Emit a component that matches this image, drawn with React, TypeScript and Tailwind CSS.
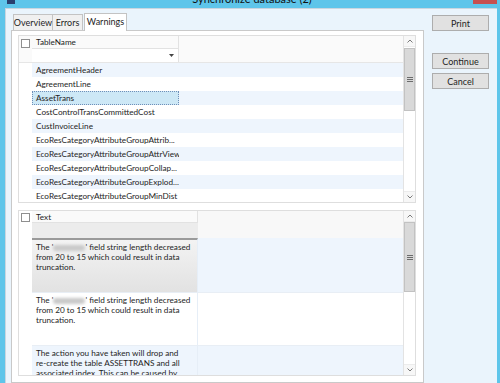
import React from "react";

function ScrollBar({ thumbTop, thumbH }: { thumbTop: number; thumbH: number }) {
  return (
    <div className="w-[12px] border-l border-[#e3e3e3] bg-white flex flex-col shrink-0">
      <div className="h-[11px] flex items-center justify-center bg-[#f7f7f7] border-b border-[#ececec]">
        <svg width="6" height="4" viewBox="0 0 6 4"><path d="M0.5 3.5 L3 1 L5.5 3.5" stroke="#7a7a7a" strokeWidth="1" fill="none" /></svg>
      </div>
      <div className="flex-1">
        <div style={{ marginTop: thumbTop, height: thumbH }} className="bg-[#d9d9d9] border border-[#c2c2c2] flex items-center justify-center">
          <svg width="6" height="5" viewBox="0 0 6 5"><path d="M0 0.5H6M0 2.5H6M0 4.5H6" stroke="#6b6b6b" strokeWidth="1" /></svg>
        </div>
      </div>
      <div className="h-[11px] flex items-center justify-center bg-[#f7f7f7] border-t border-[#ececec]">
        <svg width="6" height="4" viewBox="0 0 6 4"><path d="M0.5 0.5 L3 3 L5.5 0.5" stroke="#7a7a7a" strokeWidth="1" fill="none" /></svg>
      </div>
    </div>
  );
}

function CheckBox() {
  return <div className="w-[9px] h-[9px] border border-[#8f8f8f] bg-white" />;
}

const upperRows = [
  "AgreementHeader",
  "AgreementLine",
  "AssetTrans",
  "CostControlTransCommittedCost",
  "CustInvoiceLine",
  "EcoResCategoryAttributeGroupAttrib...",
  "EcoResCategoryAttributeGroupAttrView",
  "EcoResCategoryAttributeGroupCollap...",
  "EcoResCategoryAttributeGroupExplod...",
  "EcoResCategoryAttributeGroupMinDist",
];

function Blur() {
  return <span className="inline-block align-middle w-[32px] h-[6px] bg-[#c9c9c9] blur-[1.5px] rounded-sm" />;
}

export default function App() {
  return (
    <div className="w-[500px] h-[383px] bg-[#5ec5ea] flex flex-col overflow-hidden font-['Lato',sans-serif] text-[#1e1e1e]">
      {/* title bar */}
      <div className="h-[8px] flex items-end overflow-hidden">
        <div className="w-[7px]" />
        <div className="w-[8px] h-[4px] bg-[#2a3f6e] self-start" />
        <div className="flex-1 flex justify-center items-end">
          <span className="text-[11px] leading-[18px] text-[#111] translate-x-[8px]">Synchronize database (2)</span>
        </div>
        <div className="w-[24px] h-[4px] bg-[#c75050] self-start mr-[3px]" />
      </div>
      {/* body */}
      <div className="flex-1 ml-[5px] mr-[3px] bg-[#eaf4fc] border-l border-t border-[#c9d6e0] flex">
        {/* left */}
        <div className="ml-[5px] w-[413px] flex flex-col">
          <div className="h-[21px] flex items-end pl-[2px] text-[9px]">
            <div className="w-[40px] h-[16px] flex items-center justify-center border border-b-0 border-[#c3c3c3] bg-[#f0f0f0]">Overview</div>
            <div className="w-[30px] h-[16px] flex items-center justify-center border border-b-0 border-l-0 border-[#c3c3c3] bg-[#f0f0f0]">Errors</div>
            <div className="w-[43px] h-[18px] ml-[1px] pb-[1px] flex items-center justify-center border border-b-0 border-[#c3c3c3] bg-white relative top-[1px] z-10">Warnings</div>
          </div>
          <div className="flex-1 border border-[#c9c9c9] bg-white pl-[6px] pr-[7px] pt-[4px]">
            {/* upper grid */}
            <div className="h-[168px] border border-[#dedede] flex overflow-hidden">
              <div className="flex-1 flex flex-col">
                <div className="h-[27px] flex bg-[#fafafa] border-b border-[#e6e6e6] shrink-0">
                  <div className="w-[13px] flex justify-center pt-[3px]"><CheckBox /></div>
                  <div className="w-[147px] flex flex-col">
                    <div className="h-[13px] border-b border-r border-[#e2e2e2] pl-[4px] text-[8.2px] leading-[13px]">TableName</div>
                    <div className="flex-1 bg-white border-r border-[#e2e2e2] flex items-center justify-end pr-[4px]">
                      <svg width="5" height="3" viewBox="0 0 5 3"><path d="M0 0H5L2.5 3Z" fill="#444" /></svg>
                    </div>
                  </div>
                </div>
                {upperRows.map((r, i) => (
                  <div key={r} className="h-[14px] flex shrink-0">
                    <div className="w-[13px] bg-white" />
                    <div className={`flex-1 flex ${i % 2 === 0 ? "bg-[#eef5fd]" : "bg-white"}`}>
                      <div
                        className={`w-[147px] text-[8.2px] whitespace-nowrap overflow-hidden ${
                          i === 2
                            ? "bg-[#cde8f6] border border-dotted border-[#6f8fb8] leading-[12px] pl-[3px]"
                            : "leading-[14px] pl-[4px]"
                        }`}
                      >
                        {r}
                      </div>
                    </div>
                  </div>
                ))}
              </div>
              <ScrollBar thumbTop={1} thumbH={63} />
            </div>
            {/* lower grid */}
            <div className="h-[166px] mt-[7px] border border-[#dedede] flex overflow-hidden">
              <div className="flex-1 flex flex-col">
                <div className="h-[27px] flex bg-[#f8f8f8] shrink-0">
                  <div className="w-[13px] flex justify-center pt-[2px] bg-white"><CheckBox /></div>
                  <div className="w-[166px] flex flex-col">
                    <div className="h-[12px] border-r border-b border-[#e2e2e2] bg-[#fafafa] pl-[4px] text-[8.2px] leading-[12px]">Text</div>
                    <div className="flex-1 bg-[#ececec]" />
                  </div>
                </div>
                {[
                  { h: 54, bg: "bg-[#eef5fd]", sel: true, t: 0 },
                  { h: 53, bg: "bg-white", sel: false, t: 0 },
                  { h: 40, bg: "bg-[#eef5fd]", sel: false, t: 1 },
                ].map((r, i) => (
                  <div key={i} style={{ height: r.h }} className={`flex shrink-0 ${r.bg}`}>
                    <div className="w-[13px] bg-white" />
                    <div
                      className={`w-[166px] border-r border-[#e6eef7] pl-[4px] pr-[2px] pt-[2px] text-[8.2px] leading-[10px] ${
                        r.sel ? "bg-gradient-to-b from-[#f3f3f3] to-[#e2e2e2] border-t-2 border-t-[#9a9a9a]" : "border-t border-t-[#e8eef5]"
                      }`}
                    >
                      {r.t === 0 ? (
                        <>
                          The '<Blur />' field string length decreased from 20 to 15 which could result in data truncation.
                        </>
                      ) : (
                        <>
                          The action you have taken will drop and
                          <br />
                          re-create the table ASSETTRANS and all
                          <br />
                          associated index. This can be caused by
                        </>
                      )}
                    </div>
                    <div className={`flex-1 ${r.sel ? "" : "border-t border-[#e8eef5]"}`} />
                  </div>
                ))}
              </div>
              <ScrollBar thumbTop={0} thumbH={70} />
            </div>
          </div>
        </div>
        {/* right buttons */}
        <div className="ml-[8px] w-[57px] flex flex-col pt-[6px] text-[9px]">
          <button className="h-[16px] bg-[#e1e1e1] border border-[#adadad] leading-none">Print</button>
          <button className="h-[16px] mt-[22px] bg-[#e1e1e1] border border-[#adadad] leading-none">Continue</button>
          <button className="h-[16px] mt-[4px] bg-[#e1e1e1] border border-[#adadad] leading-none">Cancel</button>
        </div>
      </div>
    </div>
  );
}
